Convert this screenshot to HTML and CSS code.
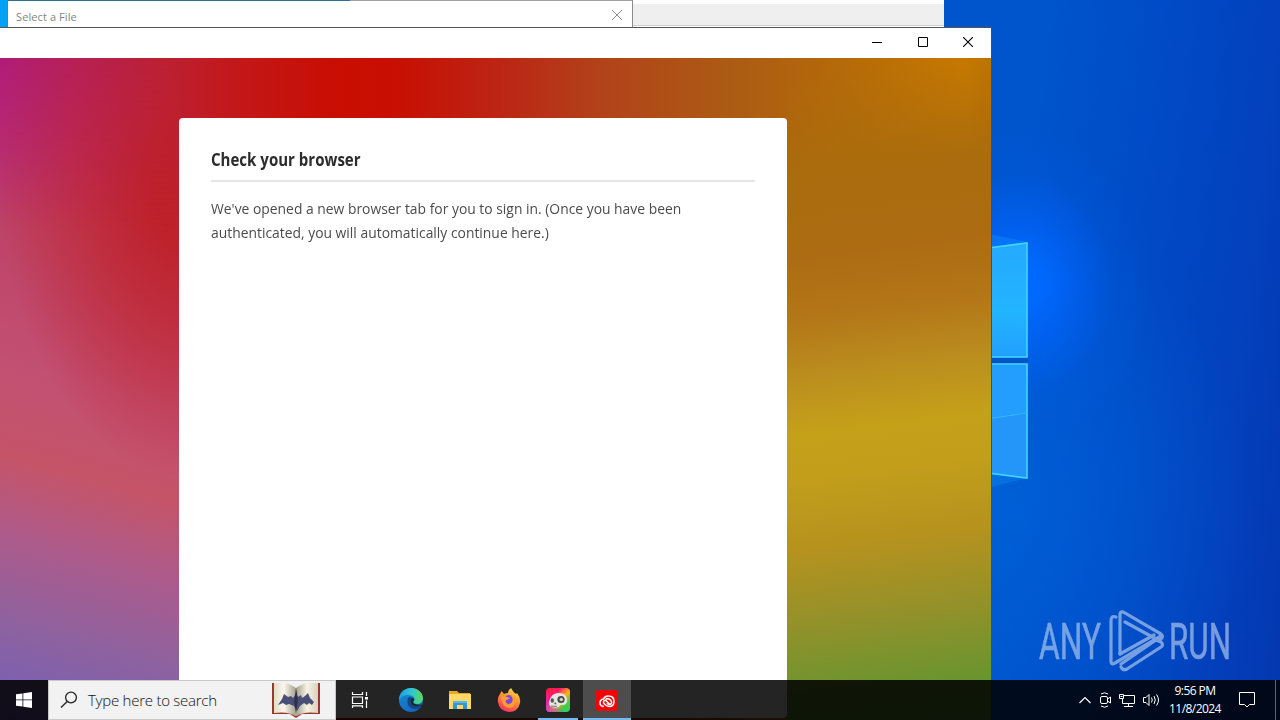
FILE: index.html
```html
<!DOCTYPE html>
<html lang="en">
<head>
<meta charset="UTF-8">
<meta name="viewport" content="width=device-width, initial-scale=1.0">
<title>Check your browser</title>
<link rel="stylesheet" href="styles.css">
</head>
<body>
<div class="desktop">
  <!-- wallpaper logo -->
  <svg class="logo" width="60" height="270" viewBox="980 225 60 270">
    <defs>
      <linearGradient id="pane1" x1="0" y1="0" x2="0" y2="1">
        <stop offset="0" stop-color="#25a9ff"/>
        <stop offset="0.6" stop-color="#22b4ff"/>
        <stop offset="1" stop-color="#229fff"/>
      </linearGradient>
    </defs>
    <path d="M980 232L1027 242L980 250z" fill="#1496ff" opacity="0.35"/>
    <path d="M980 472L1027 478L980 490z" fill="#1496ff" opacity="0.3"/>
    <path d="M980 358H1028V363H980z" fill="#0055c8"/>
    <path d="M980 249L1027 243V357H980z" fill="url(#pane1)"/>
    <path d="M980 364H1027V478L980 472z" fill="#239eff"/>
    <path d="M980 420L1027 413V478L980 472z" fill="#2496fa"/>
    <path d="M980 249L1027 243V357H980M980 364H1027V478L980 472" fill="none" stroke="#3ed7ff" stroke-width="1.6"/>
    <path d="M980 420L1027 413" stroke="#36b6ff"/>
  </svg>

  <div class="window back-window"></div>

  <div class="window file-window">
    <span class="file-title">Select a File</span>
    <svg width="10" height="10" viewBox="0 0 10 10"><path d="M0 0L10 10M10 0L0 10" stroke="#8c8c8c"/></svg>
  </div>

  <div class="window main-window">
    <div class="titlebar">
      <svg width="10" height="10" viewBox="0 0 10 10"><path d="M0 5.500H10" stroke="#000"/></svg>
      <svg width="10" height="10" viewBox="0 0 10 10"><path d="M.5 .5H9.500V9.500H.5z" fill="none" stroke="#000"/></svg>
      <svg width="10" height="10" viewBox="0 0 10 10"><path d="M0 0L10 10M10 0L0 10" stroke="#000" stroke-width="1.1"/></svg>
    </div>
    <div class="content">
      <div class="card">
        <h1><span>Check your browser</span></h1>
        <p>We've opened a new browser tab for you to sign in. (Once you have been<br>authenticated, you will automatically continue here.)</p>
      </div>
    </div>
  </div>

  <div class="watermark">
    <svg width="204" height="66" viewBox="0 0 204 66">
      <g fill="#a9c4ee" stroke="#a9c4ee" stroke-width="0.6" font-family="Roboto, sans-serif" font-size="50">
        <text x="1" y="50" textLength="62" lengthAdjust="spacingAndGlyphs">ANY</text>
        <text x="131" y="50" textLength="62" lengthAdjust="spacingAndGlyphs">RUN</text>
      </g>
      <g fill="none" stroke="#a9c4ee" stroke-width="3.200" stroke-linejoin="round" stroke-linecap="round">
        <path d="M78 8Q73 6 73 12V53Q73 56 77 54L123 27M82 45V6Q82 1 87 4L123 25Q126 27 123 30L120 31L87 13"/>
        <path d="M82 45L116 26M83 58Q85 62 89 60L123 38Q126 36 123 33L118 31L83 55"/>
      </g>
    </svg>
  </div>

  <div class="taskbar">
    <div class="start">
      <svg width="16" height="16" viewBox="0 0 16 16" fill="#fff"><path d="M0 2.300L6.500 1.400V7.500H0zM7.300 1.300L16 0V7.500H7.300zM0 8.300H6.500V14.600L0 13.700zM7.300 8.300H16V16L7.300 14.700z"/></svg>
    </div>
    <div class="search">
      <svg width="18" height="18" viewBox="0 0 18 18" fill="none" stroke="#222" stroke-width="1.300"><circle cx="11" cy="6.500" r="5.400"/><path d="M7.200 10.500L1 16.500"/></svg>
      <span class="search-text">Type here to search</span>
      <svg class="book" width="48" height="36" viewBox="0 0 48 36">
        <defs>
          <linearGradient id="pageLeft"><stop offset="0" stop-color="#e3dcc8"/><stop offset="0.45" stop-color="#fbf8ee"/><stop offset="1" stop-color="#a5a08c"/></linearGradient>
          <linearGradient id="pageRight"><stop offset="0" stop-color="#a5a08c"/><stop offset="0.5" stop-color="#f6f3e6"/><stop offset="1" stop-color="#d9d1bd"/></linearGradient>
        </defs>
        <path d="M0 1H6V30H17L24 34L31 30H42V1H48V32H30L24 36L18 32H0z" fill="#97392f"/>
        <path d="M2 1Q17 0 24 6V34Q16 29 2 31z" fill="url(#pageLeft)"/>
        <path d="M46 1Q31 0 24 6V34Q32 29 46 31z" fill="url(#pageRight)"/>
        <path d="M24 12L26 15L29 13L30 16L33 14L36 11L38 16L42 20L40 23L37 21L35 23L32 21L28 24L25 29L22 24L17 22L14 23L11 21L6 23L10 17L12 12L16 15L19 14L21 16z" fill="#4a4f78"/>
        <path d="M24 6L26 17L24 31L22 20z" fill="#303249"/>
      </svg>
    </div>
    <div class="apps">
      <div class="app">
        <svg width="18" height="16" viewBox="0 0 18 16" fill="none" stroke="#fff" stroke-width="1.200"><path d="M1.500 0V2.500H11.500V0M1.500 5H11.500V11.500H1.500zM1.500 16V13.800H11.500V16M15.500 0V4M15.500 8.500V16"/><path d="M14 5H17V7.500H14z" fill="#fff" stroke="none"/></svg>
      </div>
      <div class="app">
        <svg width="24" height="24" viewBox="0 0 24 24">
          <defs>
            <linearGradient id="edgeTop"><stop offset="0" stop-color="#1b9de2"/><stop offset="0.55" stop-color="#31c7cc"/><stop offset="1" stop-color="#5ed957"/></linearGradient>
            <linearGradient id="edgeLow" x1="0" y1="0" x2="0.6" y2="1"><stop offset="0" stop-color="#1b8ed9"/><stop offset="1" stop-color="#1466bd"/></linearGradient>
          </defs>
          <circle cx="12" cy="12" r="12" fill="url(#edgeLow)"/>
          <path d="M0 12C0 5 5 0 12 0S24 5 24 10C24 14 21 16 18 16S14 15 14 14S16 13 15.500 11C15 8 12 7 8 7Q3 7.500 0 12z" fill="url(#edgeTop)"/>
          <path d="M9 10C7 15 10 21 16 21Q19 21 22 19.500C24 18 23 17 21.500 17.500C16 19 12 17 11.800 13Q12 11 13 9.500Q10 8.500 9 10z" fill="#104886"/>
          <path d="M13 10Q16 10 14.800 12.500Q13.500 14 15 15.500Q18 17.500 22 16.500L24 17L24 19L21 17.500Q12 20 11.700 13Q11.800 10.500 13 10z" fill="#242424"/>
        </svg>
      </div>
      <div class="app">
        <svg width="22" height="20" viewBox="0 0 22 20"><path d="M0 1H8L10 3H21V19H0z" fill="#e9a82d"/><path d="M0 4H22V19H0z" fill="#ffd866"/><path d="M4 11H18V19H14V15H8V19H4z" fill="#3395d4"/><path d="M4 11H18V13H4z" fill="#58b7eb"/></svg>
      </div>
      <div class="app">
        <svg width="24" height="24" viewBox="0 0 24 24">
          <defs><linearGradient id="fire" x1="0.75" y1="0" x2="0.3" y2="1"><stop offset="0" stop-color="#ffe246"/><stop offset="0.45" stop-color="#ff9130"/><stop offset="1" stop-color="#f52d62"/></linearGradient></defs>
          <path d="M3 6L4.500 3L7 6Q9 5 11 5Q11 2 14 0Q16 4 19 6L20 5Q24 10 23 15Q21 24 12 24Q2 23 1 14Q0 10 3 6z" fill="url(#fire)"/>
          <circle cx="12" cy="13" r="6" fill="#7749db"/>
          <path d="M4 9Q7 7 10 9L13 10Q11 12 9 12Q8 15 11 16Q14 16 15 14Q17 10 13 7Q19 8 19 14Q17 20 12 20Q5 19 4 9z" fill="#ff9a34"/>
        </svg>
      </div>
      <div class="app running">
        <svg width="24" height="24" viewBox="0 0 24 24">
          <defs>
            <linearGradient id="rainbow" x1="0" y1="0" x2="1" y2="1"><stop offset="0" stop-color="#ff2030"/><stop offset="0.3" stop-color="#ff176c"/><stop offset="0.55" stop-color="#ffb31b"/><stop offset="0.78" stop-color="#45c947"/><stop offset="1" stop-color="#1ed77b"/></linearGradient>
            <linearGradient id="rainbow2" x1="0" y1="1" x2="0.5" y2="0.6"><stop offset="0" stop-color="#b93be0"/><stop offset="1" stop-color="#d328c2" stop-opacity="0"/></linearGradient>
          </defs>
          <rect width="24" height="24" rx="4" fill="url(#rainbow)"/>
          <rect width="24" height="24" rx="4" fill="url(#rainbow2)"/>
          <path d="M4 11Q6 5 13 5Q20 5 21 11Q22 15 18 17Q14 16 13 19Q8 21 4 18Q2 15 4 11z" fill="#e4e6e1"/>
          <circle cx="15" cy="11.500" r="3.600" fill="#454745"/><circle cx="15.300" cy="11.500" r="1.800" fill="#c9cdcb"/>
          <ellipse cx="6.300" cy="12.500" rx="1.700" ry="2.300" fill="#555753"/><path d="M8 16L9.500 14L10.500 16.500z" fill="#555"/><path d="M5 18L11 18.500" stroke="#777"/>
        </svg>
      </div>
      <div class="app active">
        <svg width="22" height="21" viewBox="0 0 22 21"><rect width="22" height="21" rx="2" fill="#ed0708"/><g fill="none" stroke="#fff" stroke-width="1.500"><path d="M8 16.500Q4 16.500 4 12.800Q4 9.500 7.500 9Q9 5.500 12.500 6Q18 6 18 11.500Q18 16.500 13 16.500Q10.500 16.500 8 13.500Q6.800 12 8 10.800Q9.500 9.500 11.500 12L13.500 14"/><path d="M9.500 9.500Q12 7.500 14.500 10Q17 13 14 14.500Q12.500 15 11 13"/></g></svg>
      </div>
    </div>
    <div class="tray">
      <svg width="12" height="8" viewBox="0 0 12 8"><path d="M.5 7L6 1.500L11.500 7" fill="none" stroke="#fff" stroke-width="1.200"/></svg>
      <svg width="12" height="16" viewBox="0 0 12 16" fill="none" stroke="#fff"><path d="M2 2Q5.500 -.5 9 2M2 14Q5.500 16.500 9 14"/><rect x="1.500" y="4.500" width="7" height="7" rx="1.500"/><path d="M8.500 7L11.500 5V11L8.500 9"/></svg>
      <svg width="16" height="14" viewBox="0 0 16 14" fill="none" stroke="#fff"><path d="M5 2.500H15.500V10.500H3.500V6M9.500 10.500V13.500M5 13.500H14M.5 1.500H4.500V5.500H.5z"/><path d="M1.500 3.500H3.500"/></svg>
      <svg width="17" height="14" viewBox="0 0 17 14" fill="none" stroke="#fff"><path d="M.5 4.500H3L6 1.500V12.500L3 9.500H.5zM8.500 4.500Q10 7 8.500 9.500M11 3Q13.500 7 11 11M13.500 1.500Q17.500 7 13.500 12.500"/></svg>
    </div>
    <div class="clock"><span>9:56 PM</span><span>11/8/2024</span></div>
    <div class="notice">
      <svg width="16" height="16" viewBox="0 0 16 16"><path d="M.5 .5H15.500V12.500H10.500L8 15L5.500 12.500H.5z" fill="none" stroke="#fff"/></svg>
    </div>
  </div>
</div>
</body>
</html>
```

FILE: styles.css
```css
* {
  box-sizing: border-box;
}
body {
  margin: 0;
  font-family: "Open Sans", sans-serif;
}
svg {
  display: block;
  flex: none;
}
.desktop {
  position: relative;
  width: 1280px;
  height: 720px;
  overflow: hidden;
  background:
    linear-gradient(#00a2f8, #00a2f8) 0 0 / 8px 28px no-repeat,
    radial-gradient(ellipse 130px 160px at 1022px 285px, #006aff 12%, rgba(0, 100, 252, 0.65) 38%, rgba(0, 92, 230, 0.2) 70%, rgba(0, 90, 225, 0) 100%),
    radial-gradient(ellipse 260px 300px at 990px 500px, rgba(0, 100, 218, 0.75), rgba(0, 90, 210, 0)),
    linear-gradient(97deg, #0055cd 76%, #004bc7 85%, #0340bc 94%, #0437b0 100%);
}
.logo {
  position: absolute;
  left: 980px;
  top: 225px;
}
.window {
  position: absolute;
}
.back-window {
  left: 632px;
  top: 0;
  width: 312px;
  height: 27px;
  background: #efefef;
  border-top: 4px solid #fff;
  border-bottom: 1px solid #fff;
  box-shadow: inset 0 -1px #d2d2d2;
}
.file-window {
  display: flex;
  justify-content: space-between;
  align-items: center;
  left: 7px;
  top: 0;
  width: 626px;
  height: 28px;
  padding: 2px 10px 0 8px;
  background: linear-gradient(to right, #2f6f93 342px, #a0a0a0 342px) 0 0 / 100% 1px no-repeat #fff;
  border-left: 1px solid #3f87ad;
  border-right: 1px solid #8b8b8b;
}
.file-title {
  padding-top: 2px;
  font-size: 11px;
  letter-spacing: 0.1px;
  color: #858585;
}
.main-window {
  left: 0;
  top: 27px;
  width: 992px;
  height: 693px;
  border-top: 1px solid #555;
  border-right: 1px solid #35556b;
}
.titlebar {
  display: flex;
  justify-content: flex-end;
  align-items: center;
  gap: 35.5px;
  height: 30px;
  padding: 0 18px 2px 0;
  background: #fff;
}
.content {
  position: relative;
  display: flex;
  height: 662px;
  padding: 60px 204px 2px 179px;
  background: linear-gradient(to right, #b11d79 0, #b72058 70px, #bc2032 165px, #c31718 240px, #c90d01 345px, #c80e02 390px, #bc2515 500px, #b2421a 600px, #ac5b14 730px, #b56b08 850px, #c77900 965px, #bc7400 991px);
}
/* colour fields on both sides of the card */
.content::before,
.content::after {
  content: "";
  position: absolute;
  top: 0;
  height: 662px;
}
.content::before {
  left: 0;
  width: 181px;
  background:
    radial-gradient(ellipse 190px 300px at 190px 120px, #be2129 20%, rgba(192, 38, 48, 0.6) 60%, rgba(194, 50, 62, 0) 100%),
    linear-gradient(195deg, #b9306a 60px, #bd4266 200px, #c25073 340px, #c55468 430px, #ab5b8c 510px, #8e629f 590px, #7760b4 670px, #6d61bd 740px);
  -webkit-mask-image: linear-gradient(transparent, #000 170px);
  mask-image: linear-gradient(transparent, #000 170px);
}
.content::after {
  right: 0;
  width: 205px;
  background: linear-gradient(173deg, rgba(176, 105, 12, 0) 20px, #aa6c0d 120px, #ad6c13 200px, #b37618 260px, #bb8e1e 320px, #c5a019 375px, #c29e1b 420px, #b6921e 490px, #93912a 565px, #669530 645px, #4c9635 700px);
}
.card {
  position: relative;
  z-index: 1;
  width: 608px;
  padding: 30px 32px;
  background: #fff;
  border-radius: 4px;
}
.card h1 {
  height: 34px;
  margin: 0;
  border-bottom: 2px solid #e6e6e6;
  font-size: 17px;
  line-height: 24px;
  color: #2c2c2c;
}
/* narrower letterforms */
.card h1 span,
.card p {
  display: inline-block;
  transform: scaleX(0.925);
  transform-origin: left;
}
.card h1 span {
  transform: scaleX(0.885);
}
.card p {
  margin: 14px 0 0;
  font-size: 15px;
  line-height: 24px;
  white-space: nowrap;
  color: #4b4b4b;
}
.watermark {
  position: absolute;
  left: 1038px;
  top: 609px;
  opacity: 0.7;
}
.taskbar {
  position: absolute;
  z-index: 2;
  left: 0;
  top: 680px;
  display: flex;
  width: 1280px;
  height: 40px;
  background: rgba(0, 0, 0, 0.86);
  color: #fff;
}
.start,
.app {
  display: flex;
  justify-content: center;
  align-items: center;
  width: 48px;
}
.search {
  display: flex;
  align-items: center;
  width: 288px;
  padding-left: 11px;
  background: #f2f2f2;
  border: 1px solid #c8c8c8;
}
.search-text {
  width: 184px;
  margin-left: 10px;
  font-size: 15px;
  font-weight: 300;
  letter-spacing: -0.25px;
  color: #111;
}
.apps {
  display: flex;
  gap: 1px;
}
.app.running {
  width: 40px;
  margin: 0 4px;
  box-shadow: inset 0 -2px #76b9ed;
}
.app.active {
  background: #4d4d4d;
  box-shadow: inset 0 -2px #76b9ed;
}
.apps .app:nth-child(2) {
  margin-left: 2px;
}
.tray {
  display: flex;
  align-items: center;
  gap: 8px;
  margin-left: auto;
}
.clock {
  display: flex;
  flex-direction: column;
  align-items: center;
  width: 70px;
  padding-top: 2px;
  font-size: 12px;
  line-height: 18px;
  letter-spacing: -0.55px;
}
.notice {
  display: flex;
  align-items: center;
  width: 46px;
  padding-left: 9px;
  border-right: 1px solid #5b6472;
  margin-right: 4px;
}
```
